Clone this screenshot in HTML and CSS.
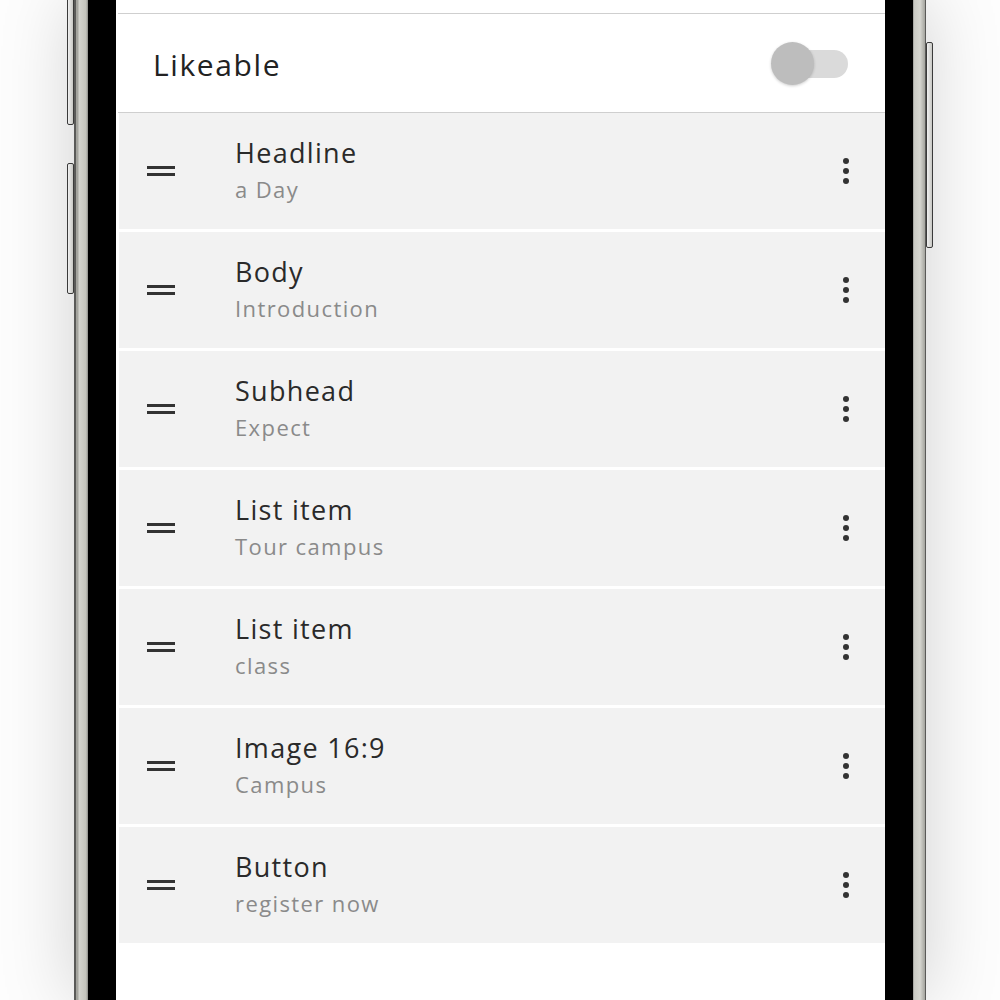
FILE: index.html
```html
<!DOCTYPE html>
<html lang="en">
<head>
<meta charset="utf-8">
<title>Likeable</title>
<link rel="stylesheet" href="styles.css">
</head>
<body>
<div class="stage">
  <div class="phone">
    <span class="btn btn-l1"></span>
    <span class="btn btn-l2"></span>
    <span class="btn btn-r1"></span>
    <div class="rim">
      <div class="bezel">
        <div class="screen">
          <div class="top-strip"></div>
          <div class="setting">
            <span class="setting-label">Likeable</span>
            <span class="toggle"><span class="track"></span><span class="thumb"></span></span>
          </div>
          <ul class="blocks">
            <li class="block">
              <span class="drag"><i></i><i></i></span>
              <div class="block-text"><div class="block-title">Headline</div><div class="block-sub">a Day</div></div>
              <span class="kebab"><i></i><i></i><i></i></span>
            </li>
            <li class="block">
              <span class="drag"><i></i><i></i></span>
              <div class="block-text"><div class="block-title">Body</div><div class="block-sub">Introduction</div></div>
              <span class="kebab"><i></i><i></i><i></i></span>
            </li>
            <li class="block">
              <span class="drag"><i></i><i></i></span>
              <div class="block-text"><div class="block-title">Subhead</div><div class="block-sub">Expect</div></div>
              <span class="kebab"><i></i><i></i><i></i></span>
            </li>
            <li class="block">
              <span class="drag"><i></i><i></i></span>
              <div class="block-text"><div class="block-title">List item</div><div class="block-sub">Tour campus</div></div>
              <span class="kebab"><i></i><i></i><i></i></span>
            </li>
            <li class="block">
              <span class="drag"><i></i><i></i></span>
              <div class="block-text"><div class="block-title">List item</div><div class="block-sub">class</div></div>
              <span class="kebab"><i></i><i></i><i></i></span>
            </li>
            <li class="block">
              <span class="drag"><i></i><i></i></span>
              <div class="block-text"><div class="block-title">Image 16:9</div><div class="block-sub">Campus</div></div>
              <span class="kebab"><i></i><i></i><i></i></span>
            </li>
            <li class="block">
              <span class="drag"><i></i><i></i></span>
              <div class="block-text"><div class="block-title">Button</div><div class="block-sub">register now</div></div>
              <span class="kebab"><i></i><i></i><i></i></span>
            </li>
          </ul>
        </div>
      </div>
    </div>
  </div>
</div>
</body>
</html>
```
FILE: styles.css
```css
html, body {
  margin: 0;
  padding: 0;
  background: #ffffff;
}
body {
  font-family: "Open Sans", "Noto Sans", "Liberation Sans", sans-serif;
}
.stage {
  width: 1000px;
  height: 1000px;
  overflow: hidden;
  display: flex;
  justify-content: center;
  background: #fdfdfd;
}
.phone {
  position: relative;
  width: 852px;
  height: 1000px;
  box-shadow: 0 0 70px rgba(0, 0, 0, 0.18);
  display: flex;
}
.rim {
  flex: 1;
  display: flex;
  border-left: 2px solid #5a5a58;
  border-right: 1px solid #5a5a58;
  padding: 0 12px 0 12px;
  background: linear-gradient(90deg, #a4a49e 0, #a4a49e 2px, #d4d4ce 3px, #c4c4bc 10px, #8a8a86 12px, #8a8a86 calc(100% - 12px), #c9c9c3 calc(100% - 11px), #d6d6d0 calc(100% - 5px), #a4a49e 100%);
}
.bezel {
  flex: 1;
  display: flex;
  background: #000;
  padding: 0 28px 0 28px;
}
.screen {
  flex: 1;
  background: #ffffff;
  display: flex;
  flex-direction: column;
}
.btn {
  position: absolute;
  width: 5px;
  border: 1px solid #3a3a3a;
  background: linear-gradient(90deg, #f0f0f0, #c8c8c4);
  border-radius: 2px;
}
.btn-l1 { left: -7px; top: -10px; height: 133px; }
.btn-l2 { left: -7px; top: 163px; height: 129px; }
.btn-r1 { right: -7px; top: 42px; height: 204px; }

.top-strip {
  height: 13px;
  border-bottom: 1px solid #cfcfcf;
  margin-left: 2px;
}
.setting {
  height: 98px;
  border-bottom: 1px solid #cfcfcf;
  margin-left: 2px;
  display: flex;
  align-items: center;
  justify-content: space-between;
  padding: 0 37px 0 35px;
}
.setting-label {
  font-size: 30px;
  color: #222;
  letter-spacing: 1.6px;
  margin-top: 2px;
}
.toggle {
  position: relative;
  width: 77px;
  height: 44px;
  display: block;
  margin-top: 2px;
}
.track {
  position: absolute;
  right: 0;
  top: 8px;
  width: 64px;
  height: 28px;
  border-radius: 14px;
  background: #dadada;
}
.thumb {
  position: absolute;
  left: 0;
  top: 0;
  width: 43px;
  height: 43px;
  border-radius: 50%;
  background: #bdbdbd;
  box-shadow: 0 1px 3px rgba(0, 0, 0, 0.2);
}
.blocks {
  list-style: none;
  margin: 0;
  padding: 0;
  display: flex;
  flex-direction: column;
  gap: 3px;
}
.block {
  height: 116px;
  margin-left: 3px;
  background: #f2f2f2;
  display: flex;
  align-items: center;
}
.drag {
  width: 28px;
  margin-left: 28px;
  display: flex;
  flex-direction: column;
  gap: 4px;
}
.drag i {
  display: block;
  height: 3px;
  background: #333;
}
.block-text {
  flex: 1;
  margin-left: 60px;
}
.block-title {
  font-size: 27px;
  line-height: 36px;
  color: #2a2a2a;
  letter-spacing: 1.3px;
}
.block-sub {
  font-size: 22px;
  line-height: 36px;
  color: #8a8a8a;
  letter-spacing: 1.4px;
}
.kebab {
  display: flex;
  flex-direction: column;
  gap: 4px;
  margin-right: 36px;
}
.kebab i {
  display: block;
  width: 6px;
  height: 6px;
  border-radius: 50%;
  background: #333;
}
```
